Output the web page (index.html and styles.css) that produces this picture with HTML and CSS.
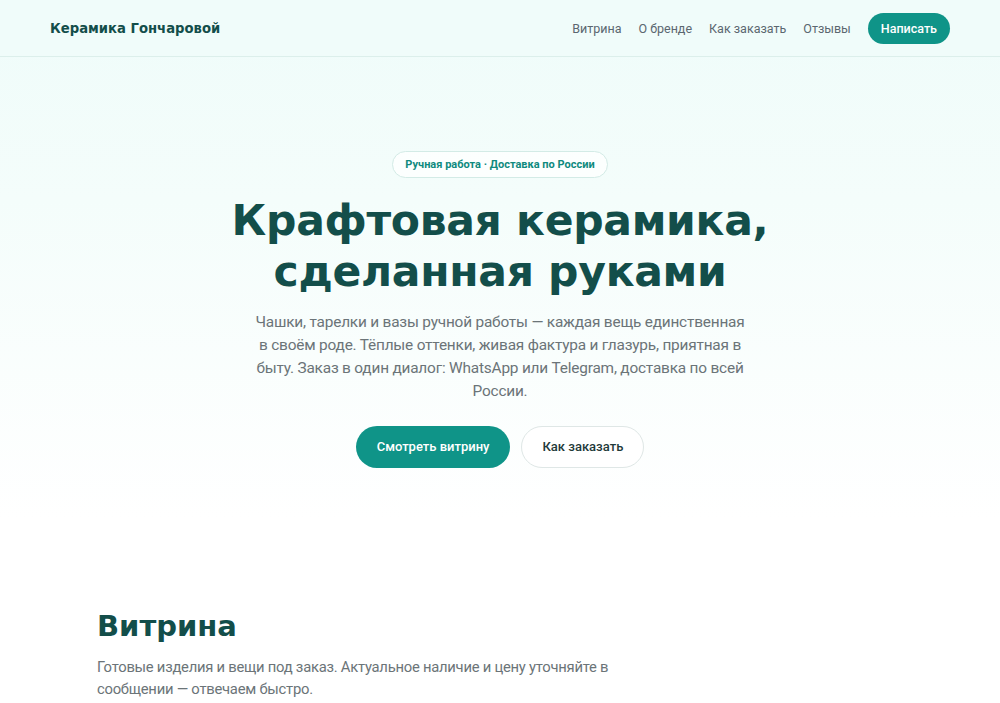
FILE: index.html
```html
<!DOCTYPE html>
<html lang="ru">
<head>
<meta charset="utf-8">
<title>Керамика Гончаровой</title>
<link rel="stylesheet" href="styles.css">
</head>
<body>
<header class="site-header">
  <div class="header-inner">
    <a class="logo" href="#">Керамика Гончаровой</a>
    <nav class="nav">
      <a href="#">Витрина</a>
      <a href="#">О бренде</a>
      <a href="#">Как заказать</a>
      <a href="#">Отзывы</a>
      <a class="nav-btn" href="#">Написать</a>
    </nav>
  </div>
</header>
<main>
  <section class="hero">
    <span class="badge">Ручная работа · Доставка по России</span>
    <h1 class="hero-title">Крафтовая керамика,<br>сделанная руками</h1>
    <p class="hero-text">Чашки, тарелки и вазы ручной работы — каждая вещь единственная в своём роде. Тёплые оттенки, живая фактура и глазурь, приятная в быту. Заказ в один диалог: WhatsApp или Telegram, доставка по всей России.</p>
    <div class="hero-actions">
      <a class="btn btn-primary" href="#">Смотреть витрину</a>
      <a class="btn btn-ghost" href="#">Как заказать</a>
    </div>
  </section>
  <section class="showcase">
    <h2 class="section-title">Витрина</h2>
    <p class="section-text">Готовые изделия и вещи под заказ. Актуальное наличие и цену уточняйте в сообщении — отвечаем быстро.</p>
  </section>
</main>
</body>
</html>
```
FILE: styles.css
```css
* { box-sizing: border-box; }
html, body { margin: 0; padding: 0; }
body {
  font-family: Roboto, "Noto Sans", sans-serif;
  color: #1f2937;
  background: linear-gradient(180deg, #effcfa 0px, #f4fdfb 200px, #ffffff 520px, #ffffff 100%);
  min-height: 100vh;
}
a { text-decoration: none; color: inherit; }

.site-header {
  height: 57px;
  background: rgba(240, 252, 250, 0.9);
  border-bottom: 1px solid #dcefeb;
}
.header-inner {
  height: 56px;
  padding: 0 50px;
  display: flex;
  align-items: center;
  justify-content: space-between;
}
.logo {
  font-family: "DejaVu Sans", sans-serif;
  font-weight: 700;
  font-size: 13.2px;
  color: #134e4a;
}
.nav {
  display: flex;
  align-items: center;
  gap: 17px;
  font-size: 12.5px;
  color: #5b6770;
}
.nav-btn {
  background: #0f9488;
  color: #fff;
  font-weight: 500;
  padding: 0 13px;
  height: 31px;
  line-height: 31px;
  border-radius: 999px;
}

.hero {
  display: flex;
  flex-direction: column;
  align-items: center;
  text-align: center;
  padding: 94px 20px 0;
}
.badge {
  display: inline-block;
  font-size: 11px;
  font-weight: 700;
  color: #0f8a7e;
  background: rgba(255,255,255,0.7);
  border: 1px solid #d3ebe6;
  border-radius: 999px;
  padding: 0 12px;
  height: 27px;
  line-height: 25px;
}
.hero-title {
  font-family: "DejaVu Sans", sans-serif;
  font-weight: 700;
  font-size: 42.5px;
  line-height: 51px;
  color: #134e4a;
  margin: 17px 0 0;
  letter-spacing: -0.3px;
}
.hero-text {
  width: 495px;
  margin: 14px 0 0;
  font-size: 15.4px;
  letter-spacing: -0.2px;
  line-height: 23px;
  color: #6b7478;
}
.hero-actions {
  display: flex;
  gap: 11px;
  margin-top: 23px;
}
.btn {
  display: inline-block;
  height: 42px;
  line-height: 40px;
  padding: 0 20px;
  border-radius: 999px;
  font-size: 13px;
  font-weight: 500;
  border: 1px solid transparent;
}
.btn-primary {
  background: #0f9488;
  color: #fff;
}
.btn-ghost {
  background: #fff;
  color: #1f3a3a;
  border-color: #dfe7e6;
}

.showcase {
  max-width: 806px;
  margin: 0 auto;
  padding: 140px 0 0;
}
.section-title {
  font-family: "DejaVu Sans", sans-serif;
  font-weight: 700;
  font-size: 29px;
  line-height: 36px;
  color: #134e4a;
  margin: 0;
}
.section-text {
  max-width: 530px;
  margin: 12px 0 0;
  font-size: 14.8px;
  letter-spacing: -0.25px;
  line-height: 22px;
  color: #6b7478;
}
```
